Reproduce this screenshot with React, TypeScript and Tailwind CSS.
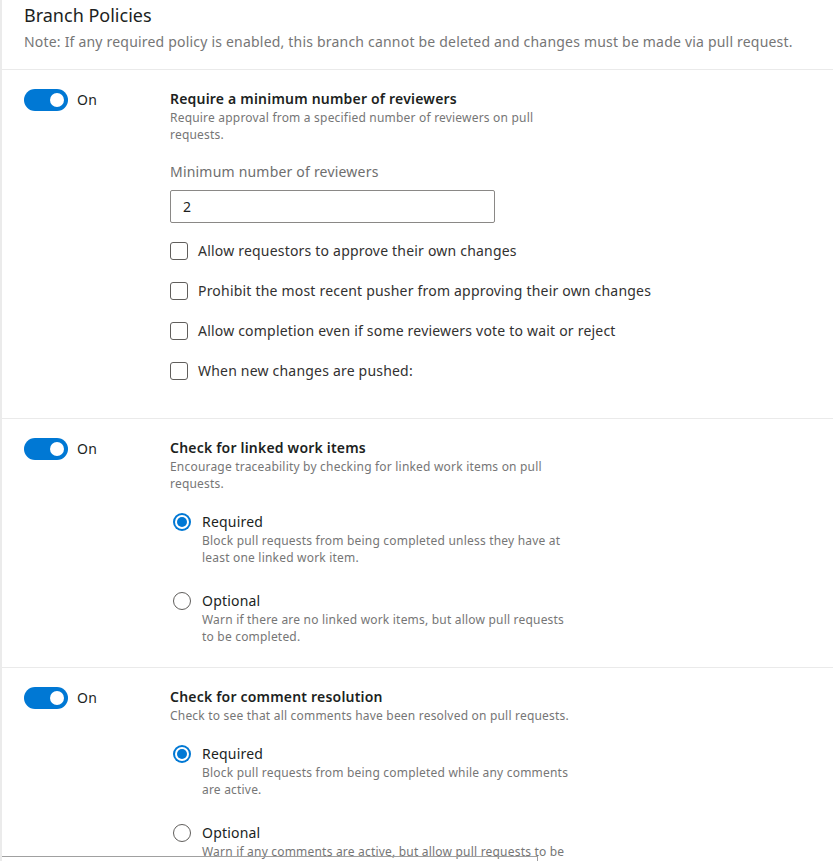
import React from 'react';

const Toggle = () => (
    <div className="flex items-center gap-[9px]">
        <div className="w-[44px] h-[22px] rounded-full bg-[#0078d4] flex items-center justify-end pr-[4px]">
            <div className="w-[14px] h-[14px] rounded-full bg-white"></div>
        </div>
        <span className="text-[14px] leading-[20px] text-[#201f1e]">On</span>
    </div>
);

const Checkbox = ({ label }: { label: string }) => (
    <div className="h-[40px] flex items-center gap-[10px]">
        <div className="w-[18px] h-[18px] rounded-[3px] border border-[#605e5c] bg-white"></div>
        <span className="text-[14px] leading-[20px] text-[#323130]">{label}</span>
    </div>
);

const Radio = ({ checked, label, desc, className = '' }: { checked?: boolean; label: string; desc: React.ReactNode; className?: string }) => (
    <div className={`flex items-start gap-[11px] pl-[3px] ${className}`}>
        <div className="h-[20px] flex items-center">
            {checked ? (
                <div className="w-[18px] h-[18px] rounded-full bg-[#0078d4] flex items-center justify-center">
                    <div className="w-[14px] h-[14px] rounded-full bg-white flex items-center justify-center">
                        <div className="w-[10px] h-[10px] rounded-full bg-[#0078d4]"></div>
                    </div>
                </div>
            ) : (
                <div className="w-[18px] h-[18px] rounded-full border border-[#605e5c] bg-white"></div>
            )}
        </div>
        <div>
            <div className="text-[14px] leading-[20px] text-[#201f1e]">{label}</div>
            <div className="text-[12px] leading-[17px] text-[#767676]">{desc}</div>
        </div>
    </div>
);

const Section = ({ title, desc, children, last }: { title: string; desc: React.ReactNode; children: React.ReactNode; last?: boolean }) => (
    <div className={`flex pt-[19px] pl-[22px] ${last ? '' : 'border-b border-[#eaeaea]'}`}>
        <div className="w-[146px] shrink-0">
            <Toggle />
        </div>
        <div className="flex flex-col">
            <div className="text-[14px] leading-[20px] font-semibold text-[#201f1e]">{title}</div>
            <div className="text-[12px] leading-[17px] text-[#767676]">{desc}</div>
            {children}
        </div>
    </div>
);

const App = () => {
    return (
        <div className="relative min-h-[861px] bg-white border-l-2 border-[#ebebeb] overflow-hidden tracking-[0.2px]" style={{ fontFamily: '"Noto Sans", "Open Sans", sans-serif' }}>
            {/* Header */}
            <div className="pl-[22px] pt-[3px] pb-[17px] border-b border-[#eaeaea]">
                <h2 className="text-[18px] leading-[24px] tracking-normal text-[#201f1e]">Branch Policies</h2>
                <p className="mt-[5px] text-[14px] leading-[20px] text-[#767676]">
                    Note: If any required policy is enabled, this branch cannot be deleted and changes must be made via pull request.
                </p>
            </div>

            <Section
                title="Require a minimum number of reviewers"
                desc={<>Require approval from a specified number of reviewers on pull<br />requests.</>}
            >
                <div className="mt-[19px] text-[14px] leading-[20px] text-[#6e6e6e]">Minimum number of reviewers</div>
                <div className="mt-[8px] w-[325px] h-[33px] border border-[#8a8886] rounded-[2px] flex items-center px-[12px] text-[14px] text-[#201f1e]">
                    2
                </div>
                <div className="mt-[8px] pb-[27px]">
                    <Checkbox label="Allow requestors to approve their own changes" />
                    <Checkbox label="Prohibit the most recent pusher from approving their own changes" />
                    <Checkbox label="Allow completion even if some reviewers vote to wait or reject" />
                    <Checkbox label="When new changes are pushed:" />
                </div>
            </Section>

            <Section
                title="Check for linked work items"
                desc={<>Encourage traceability by checking for linked work items on pull<br />requests.</>}
            >
                <div className="pt-[20px] pb-[22px]">
                    <Radio
                        checked
                        label="Required"
                        desc={<>Block pull requests from being completed unless they have at<br />least one linked work item.</>}
                    />
                    <Radio
                        className="mt-[25px]"
                        label="Optional"
                        desc={<>Warn if there are no linked work items, but allow pull requests<br />to be completed.</>}
                    />
                </div>
            </Section>

            <Section
                last
                title="Check for comment resolution"
                desc="Check to see that all comments have been resolved on pull requests."
            >
                <div className="pt-[20px] pb-[23px]">
                    <Radio
                        checked
                        label="Required"
                        desc={<>Block pull requests from being completed while any comments<br />are active.</>}
                    />
                    <Radio
                        className="mt-[25px]"
                        label="Optional"
                        desc={<>Warn if any comments are active, but allow pull requests to be<br />completed.</>}
                    />
                </div>
            </Section>

            {/* scrollbar edge at the bottom */}
            <div className="absolute left-0 top-[856px] w-[535px] h-px bg-[#a0a0a0]"></div>
            <div className="absolute left-[535px] top-[856px] w-px h-[5px] bg-[#a0a0a0]"></div>
        </div>
    );
};

export default App;
